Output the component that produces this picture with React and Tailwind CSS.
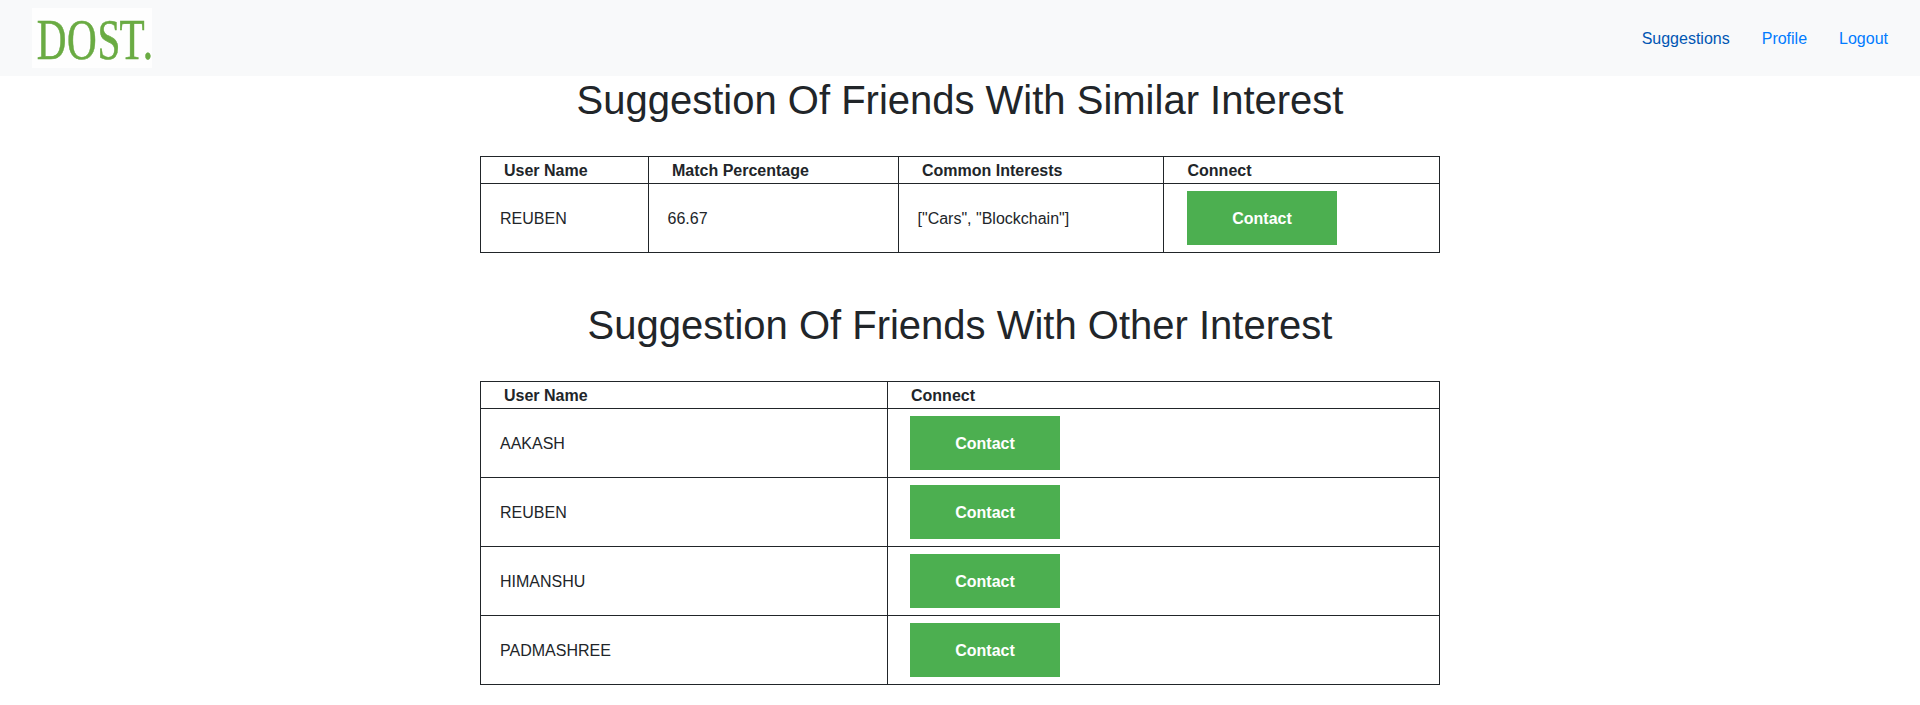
function Logo() {
  return (
    <svg width="120" height="60" viewBox="0 0 120 60" className="block overflow-visible bg-[#fefefe]" role="img" aria-label="DOST.">
      <g transform="scale(0.71 1)" fill="#6aab43" stroke="#6aab43" strokeWidth="0.6" fontFamily="'Liberation Serif', serif" fontSize="58">
        <text y="50.8" x="6.6 49.2 92.4 123.4 156">DOST.</text>
      </g>
    </svg>
  );
}

function Contact() {
  return (
    <button className="flex h-[54px] w-[150px] items-center justify-center bg-[#4caf50] pt-0.5 font-bold text-white">
      Contact
    </button>
  );
}

function FriendsTable({ title, grid, columns, rows }) {
  return (
    <section className="mx-auto w-[960px]">
      <h1 className="mb-8 text-center text-[40px] leading-12 font-normal">{title}</h1>
      <div role="table" className={`grid border-t border-l border-[#212529] ${grid}`}>
        {columns.map((c) => (
          <div
            key={c.label}
            role="columnheader"
            className={`h-[27px] border-r border-b border-[#212529] pt-0.5 font-bold ${c.head}`}
          >
            {c.label}
          </div>
        ))}
        {rows.map((row) =>
          columns.map((c, i) => (
            <div
              key={row[0] + c.label}
              role="cell"
              className={`flex h-[69px] items-center border-r border-b border-[#212529] ${c.body}`}
            >
              {i < row.length ? <span className="pt-0.5">{row[i]}</span> : <Contact />}
            </div>
          ))
        )}
      </div>
    </section>
  );
}

export default function App() {
  return (
    <div className="min-h-[705px] bg-white font-['Liberation_Sans',sans-serif] text-base text-[#212529]">
      <nav className="flex h-[76px] items-center justify-between bg-[#f8f9fa] px-8">
        <Logo />
        <div className="flex gap-8 pt-0.5 text-[#007bff]">
          <a className="text-[#0056b3]">Suggestions</a>
          <a>Profile</a>
          <a>Logout</a>
        </div>
      </nav>
      <main className="flex flex-col gap-12">
        <FriendsTable
          title="Suggestion Of Friends With Similar Interest"
          grid="grid-cols-[168px_250px_265px_276px]"
          columns={[
            { label: "User Name", head: "pl-[23px]", body: "pl-[19px]" },
            { label: "Match Percentage", head: "pl-[23px]", body: "pl-[18.5px]" },
            { label: "Common Interests", head: "pl-[23px]", body: "pl-[18.5px]" },
            { label: "Connect", head: "pl-[23.5px]", body: "pl-[23px]" },
          ]}
          rows={[["REUBEN", "66.67", '["Cars", "Blockchain"]']]}
        />
        <FriendsTable
          title="Suggestion Of Friends With Other Interest"
          grid="grid-cols-[407px_552px]"
          columns={[
            { label: "User Name", head: "pl-[23px]", body: "pl-[19px]" },
            { label: "Connect", head: "pl-[23px]", body: "pl-[22px]" },
          ]}
          rows={[["AAKASH"], ["REUBEN"], ["HIMANSHU"], ["PADMASHREE"]]}
        />
      </main>
    </div>
  );
}
